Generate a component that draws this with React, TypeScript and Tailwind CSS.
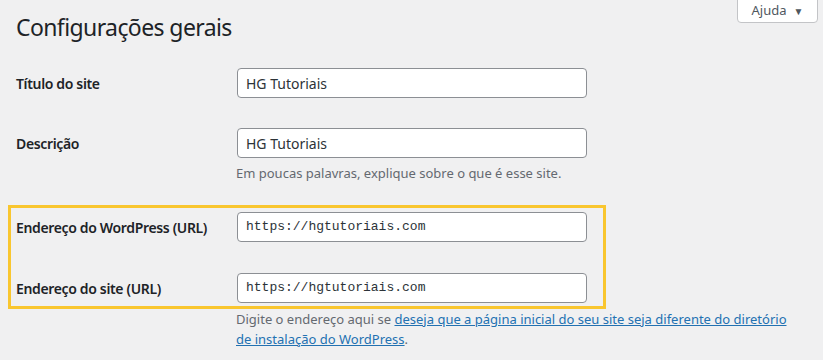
const font = { fontFamily: '"Noto Sans", "Open Sans", sans-serif' };

const TextInput = ({ value, mono }: { value: string; mono?: boolean }) => (
    <div
        className={`w-[350px] h-[30px] flex items-center px-2 bg-white border border-[#8c8f94] rounded-[4px] text-[#2c3338] ${
            mono ? "font-['Liberation_Mono',monospace] text-[13px]" : "text-[14px]"
        }`}
    >
        {value}
    </div>
);

const Row = ({ label, children, className }: { label: string; children: React.ReactNode; className?: string }) => (
    <div className={`flex items-center ${className ?? ""}`}>
        <div className="w-[221px] shrink-0 text-[14px] tracking-[-0.35px] font-semibold text-[#1d2327]">{label}</div>
        {children}
    </div>
);

export default function App() {
    return (
        <div className="w-[823px] h-[360px] overflow-hidden bg-[#f0f0f1] relative" style={font}>
            <button className="absolute right-[5px] top-[-1px] w-[81px] h-[24px] bg-white border border-[#c3c4c7] rounded-b-[4px] text-[13px] text-[#50575e] flex items-center justify-center gap-[7px]">
                Ajuda <span className="text-[10px] text-[#50575e]">▼</span>
            </button>

            <div className="pl-4 pt-[13px]">
                <h1 className="text-[23px] leading-[29px] tracking-[-0.6px] font-normal text-[#1d2327]">Configurações gerais</h1>

                <Row label="Título do site" className="mt-[26px]">
                    <TextInput value="HG Tutoriais" />
                </Row>

                <Row label="Descrição" className="mt-[30px]">
                    <TextInput value="HG Tutoriais" />
                </Row>
                <div className="pl-[220px] mt-[5px] text-[13px] leading-[20px] text-[#646970]">
                    Em poucas palavras, explique sobre o que é esse site.
                </div>
            </div>

            <div className="mt-[22px] ml-[8px] w-[598px] h-[104px] border-[3px] border-[#f9c62f] pl-[5px] pt-[4px]">
                <Row label="Endereço do WordPress (URL)">
                    <TextInput value="https://hgtutoriais.com" mono />
                </Row>
                <Row label="Endereço do site (URL)" className="mt-[31px]">
                    <TextInput value="https://hgtutoriais.com" mono />
                </Row>
            </div>

            <p className="pl-[236px] pr-[20px] text-[13px] leading-[20px] text-[#646970]">
                Digite o endereço aqui se{" "}
                <a className="text-[#2271b1] underline">
                    deseja que a página inicial do seu site seja diferente do diretório de instalação do WordPress
                </a>
                .
            </p>
        </div>
    );
}
